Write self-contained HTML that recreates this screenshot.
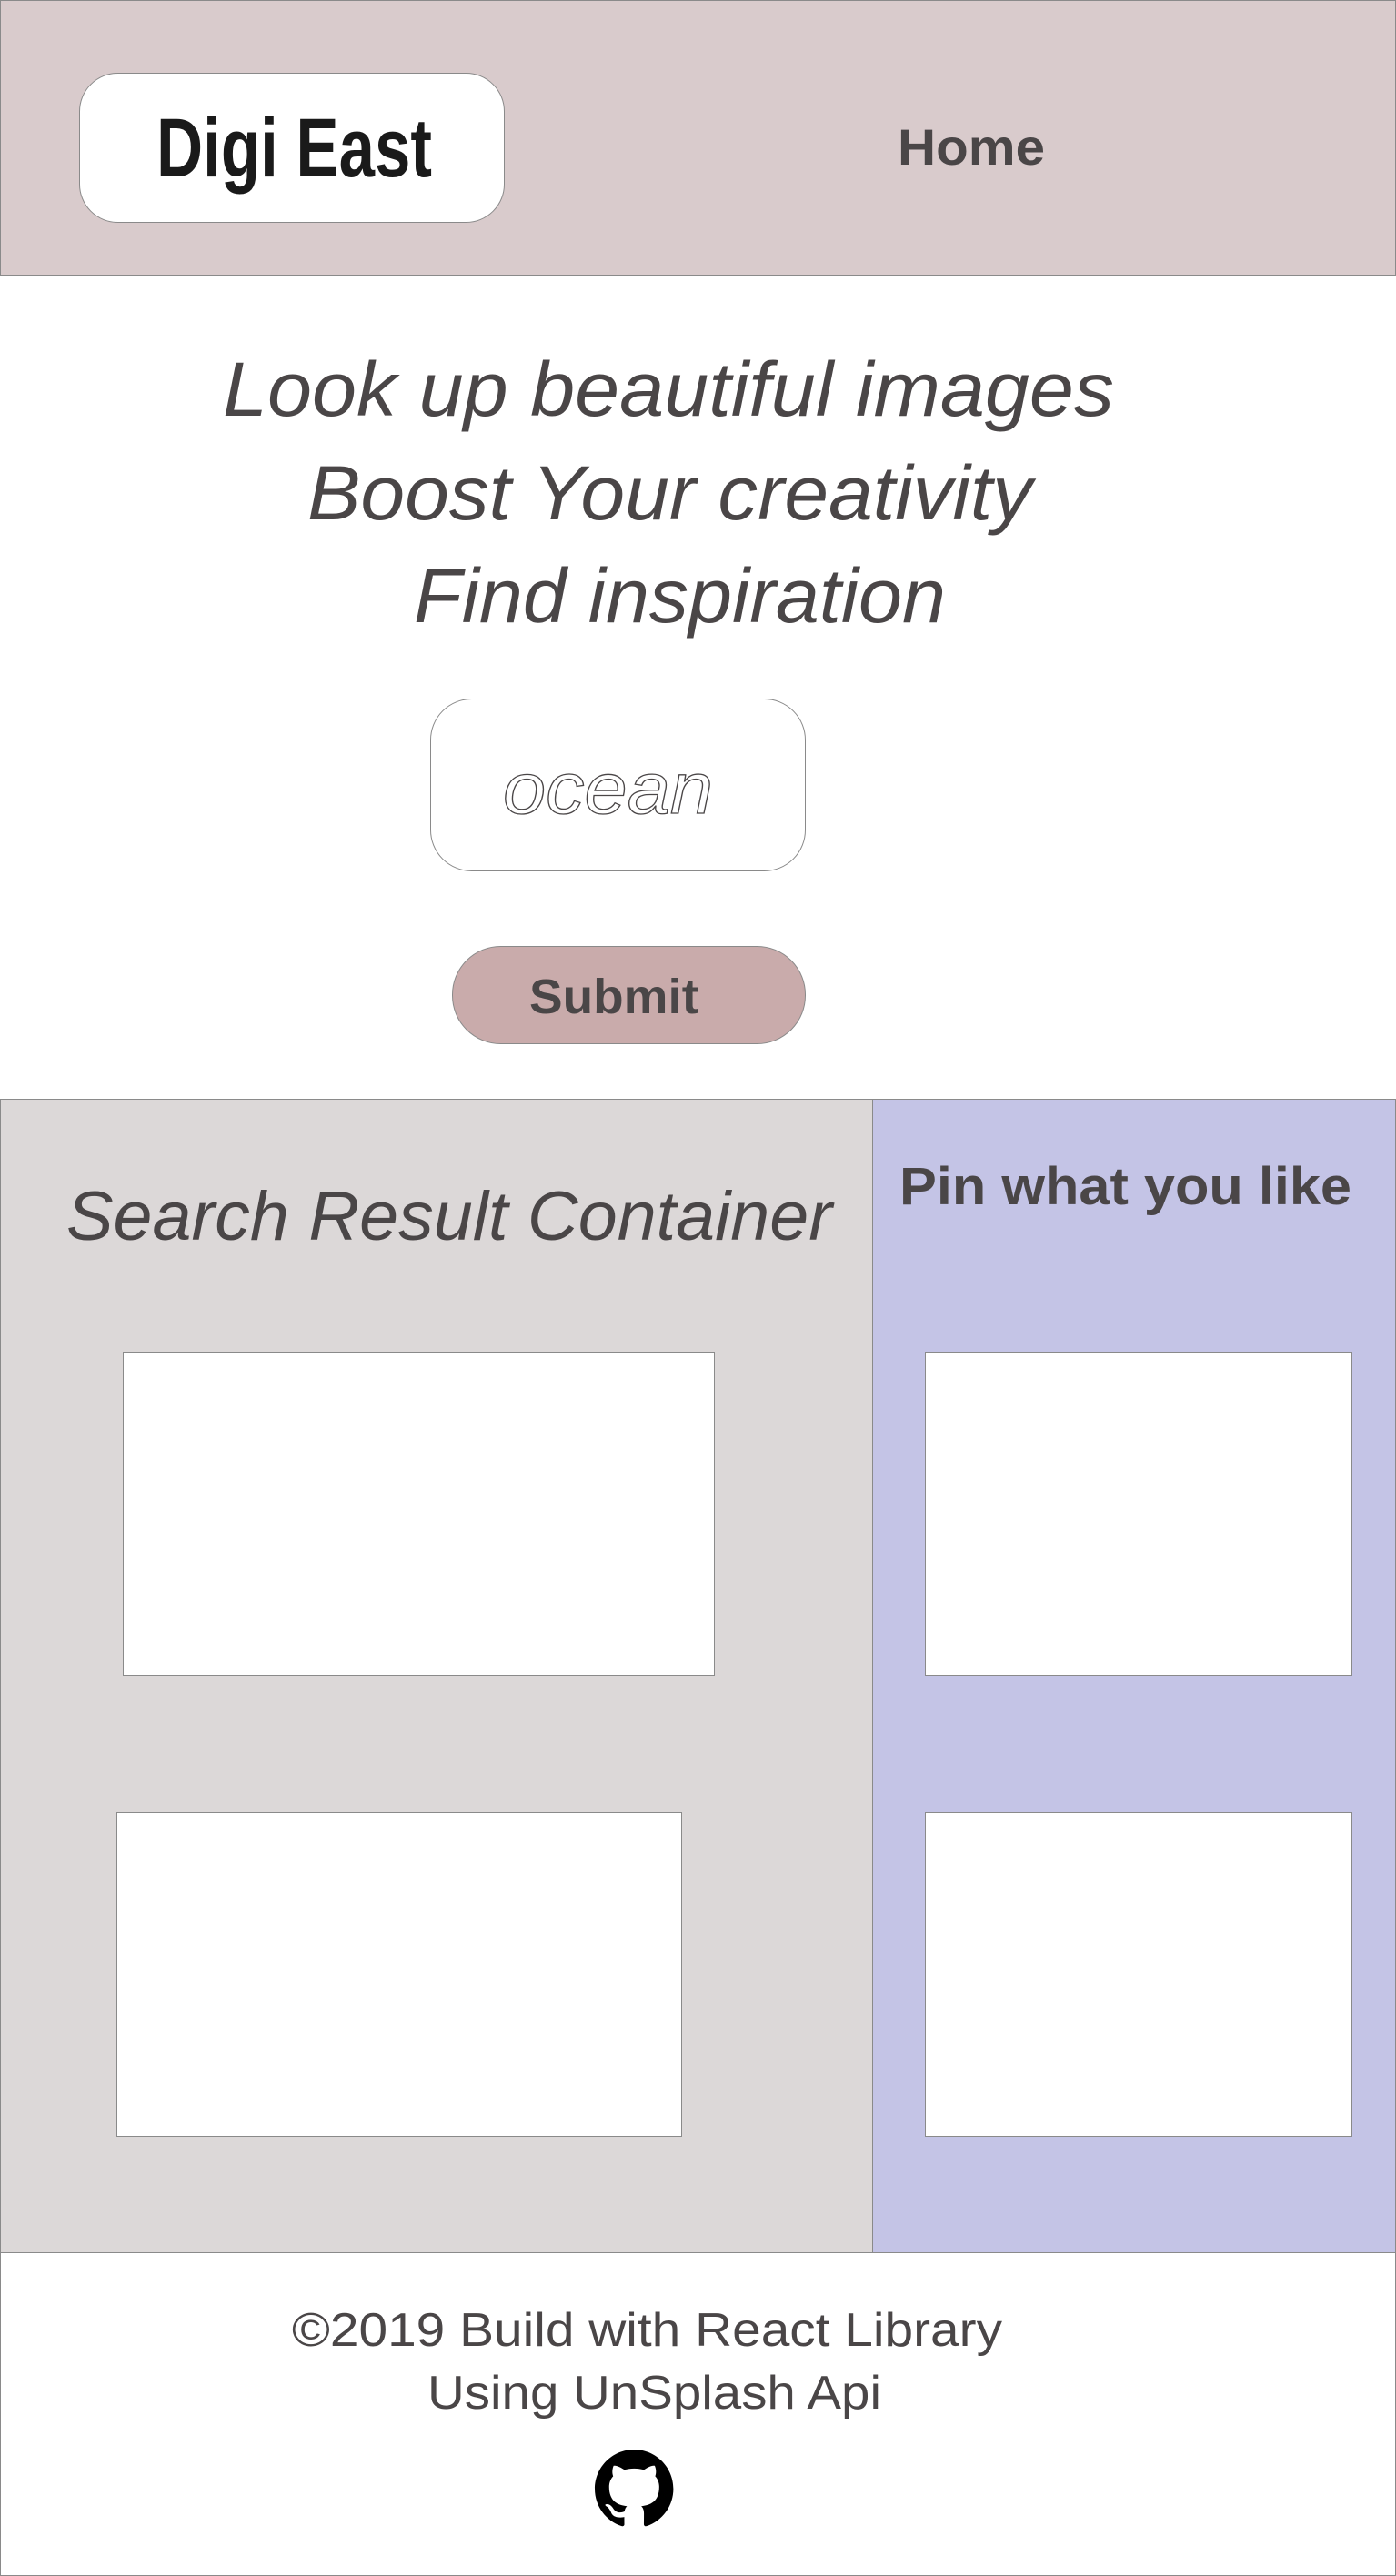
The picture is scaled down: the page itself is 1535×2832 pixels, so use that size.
<!DOCTYPE html>
<html><head><meta charset="utf-8"><style>
html,body{margin:0;padding:0;background:#fff;}
svg{display:block;}
text{font-family:"Liberation Sans",sans-serif;fill:#4a4647;}
</style></head><body>
<svg width="1535" height="2832" viewBox="0 0 1535 2832" xmlns="http://www.w3.org/2000/svg">
<rect x="0" y="0" width="1535" height="2832" fill="#fff"/>
<!-- header -->
<rect x="0.5" y="0.5" width="1534" height="302" fill="#d9cbcc" stroke="#8a8a8a"/>
<rect x="87.5" y="80.5" width="467" height="164" rx="42" fill="#fff" stroke="#8a8a8a"/>
<text x="172" y="194" font-size="92" font-weight="bold" style="font-family:'Liberation Sans Narrow','Liberation Sans',sans-serif;fill:#1a1a1a" textLength="303" lengthAdjust="spacingAndGlyphs">Digi East</text>
<text x="987" y="181" font-size="56" font-weight="bold" textLength="162" lengthAdjust="spacingAndGlyphs">Home</text>
<!-- taglines -->
<text x="245" y="457" font-size="84" font-style="italic" textLength="980" lengthAdjust="spacingAndGlyphs">Look up beautiful images</text>
<text x="338" y="571" font-size="84" font-style="italic" textLength="797" lengthAdjust="spacingAndGlyphs">Boost Your creativity</text>
<text x="455" y="684" font-size="84" font-style="italic" textLength="585" lengthAdjust="spacingAndGlyphs">Find inspiration</text>
<!-- input -->
<rect x="473.5" y="768.5" width="412" height="189" rx="45" fill="#fff" stroke="#8a8a8a"/>
<text x="553" y="894" font-size="80" font-style="italic" style="fill:#fff;stroke:#4a4647;stroke-width:1.3" textLength="231" lengthAdjust="spacingAndGlyphs">ocean</text>
<!-- submit -->
<rect x="497.5" y="1040.5" width="388" height="107" rx="53" fill="#c9abab" stroke="#8a8a8a"/>
<text x="582" y="1114" font-size="54" font-weight="bold" textLength="186" lengthAdjust="spacingAndGlyphs">Submit</text>
<!-- results section -->
<rect x="0.5" y="1208.5" width="959" height="1268" fill="#dcd8d8" stroke="#8a8a8a"/>
<rect x="959.5" y="1208.5" width="575" height="1268" fill="#c4c4e6" stroke="#8a8a8a"/>
<text x="73" y="1363" font-size="76" font-style="italic" textLength="842" lengthAdjust="spacingAndGlyphs">Search Result Container</text>
<text x="989" y="1324" font-size="58" font-weight="bold" textLength="497" lengthAdjust="spacingAndGlyphs">Pin what you like</text>
<rect x="135.5" y="1486.5" width="650" height="356" fill="#fff" stroke="#8a8a8a"/>
<rect x="128.5" y="1992.5" width="621" height="356" fill="#fff" stroke="#8a8a8a"/>
<rect x="1017.5" y="1486.5" width="469" height="356" fill="#fff" stroke="#8a8a8a"/>
<rect x="1017.5" y="1992.5" width="469" height="356" fill="#fff" stroke="#8a8a8a"/>
<!-- footer -->
<rect x="0.5" y="2476.5" width="1534" height="355" fill="#fff" stroke="#8a8a8a"/>
<text x="321" y="2579" font-size="52" textLength="781" lengthAdjust="spacingAndGlyphs">©2019 Build with React Library</text>
<text x="470" y="2648" font-size="52" textLength="499" lengthAdjust="spacingAndGlyphs">Using UnSplash Api</text>
<g transform="translate(654,2693) scale(5.4)">
<path fill="#000" d="M8 0C3.58 0 0 3.58 0 8c0 3.54 2.29 6.53 5.47 7.59.4.07.55-.17.55-.38 0-.19-.01-.82-.01-1.49-2.01.37-2.53-.49-2.69-.94-.09-.23-.48-.94-.82-1.13-.28-.15-.68-.52-.01-.53.63-.01 1.08.58 1.23.82.72 1.21 1.87.87 2.33.66.07-.52.28-.87.51-1.07-1.78-.2-3.64-.89-3.64-3.95 0-.87.31-1.59.82-2.15-.08-.2-.36-1.02.08-2.12 0 0 .67-.21 2.2.82.64-.18 1.32-.27 2-.27.68 0 1.36.09 2 .27 1.53-1.04 2.2-.82 2.2-.82.44 1.1.16 1.92.08 2.12.51.56.82 1.27.82 2.15 0 3.07-1.87 3.75-3.65 3.95.29.25.54.73.54 1.48 0 1.07-.01 1.93-.01 2.2 0 .21.15.46.55.38A8.013 8.013 0 0016 8c0-4.42-3.58-8-8-8z"/>
</g>
</svg>
</body></html>
